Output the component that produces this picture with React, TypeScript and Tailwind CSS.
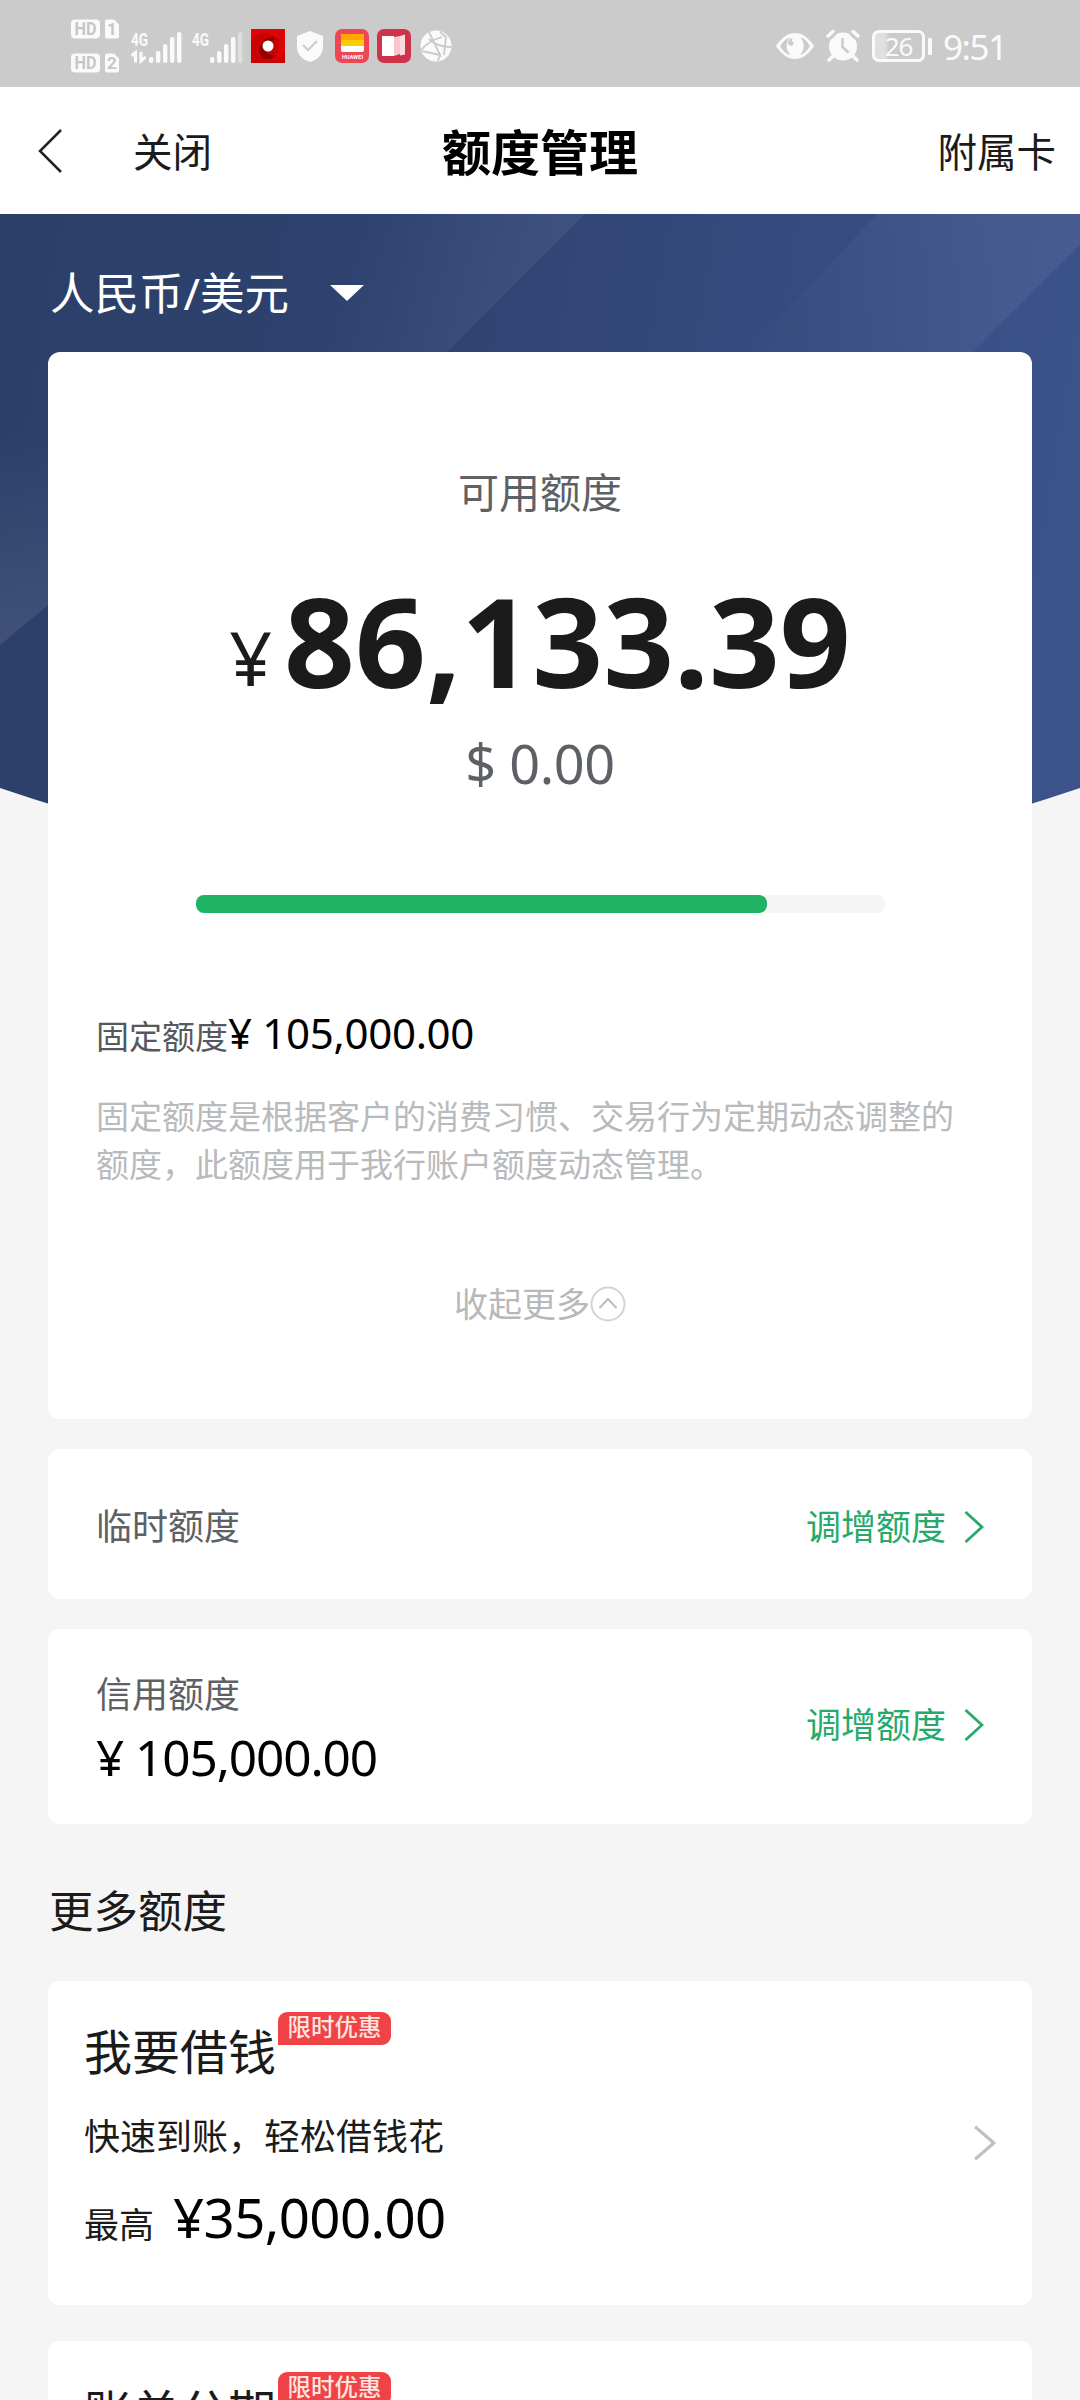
import type { ReactNode } from "react";

const offers = [
  { title: "我要借钱", tag: "限时优惠", desc: "快速到账，轻松借钱花", amount: "¥35,000.00" },
  { title: "账单分期", tag: "限时优惠" },
];

const signalBars = [
  [18, 56],
  [25, 50],
  [32, 43],
  [39, 36],
  [46, 31],
];

function HdSim({ slot }: { slot: string }) {
  return (
    <svg viewBox="0 0 48 20" className="h-[20px] w-[48px]" aria-hidden>
      <rect x="0" y="0.5" width="29" height="19" rx="4" fill="#fafafa" />
      <text x="14.5" y="16.2" textAnchor="middle" fontSize="18" fontWeight="700" fill="#c6c6c6" fontFamily="Roboto" textLength="22" lengthAdjust="spacingAndGlyphs">
        HD
      </text>
      <path d="M36 0.5h7l5 5v12a2 2 0 0 1-2 2H36a2 2 0 0 1-2-2v-15a2 2 0 0 1 2-2z" fill="#fafafa" />
      <text x="41" y="16.2" textAnchor="middle" fontSize="17" fontWeight="700" fill="#c6c6c6" fontFamily="Roboto">
        {slot}
      </text>
    </svg>
  );
}

function Signal({ level, data }: { level: number; data?: boolean }) {
  return (
    <svg viewBox="0 28 51 35" className="h-[35px] w-[51px]" aria-hidden>
      <text x="0" y="45" fontSize="19" fontWeight="700" fill="#fafafa" fontFamily="Roboto" textLength="17" lengthAdjust="spacingAndGlyphs">
        4G
      </text>
      {signalBars.map(([x, y], i) => (
        <rect key={x} x={x} y={y} width="4.4" height={62 - y} rx="2" fill="#fafafa" opacity={i < level ? 1 : 0.4} />
      ))}
      {data ? <path d="M0.500 54.500l4-3v10M10 51v9l4.500-4" fill="none" stroke="#fafafa" strokeWidth="3" /> : null}
    </svg>
  );
}

function StatusBar() {
  return (
    <div className="flex h-[87px] shrink-0 items-center bg-[#cbcbcb] pl-[71px] pr-[74px] pt-[5px]">
      <div className="flex flex-col gap-[14px]">
        <HdSim slot="1" />
        <HdSim slot="2" />
      </div>
      <div className="ml-[12px] flex items-center gap-[10px]">
        <Signal level={5} data />
        <Signal level={4} />
      </div>
      <svg viewBox="0 0 34 34" className="ml-[8px] size-[34px]" aria-hidden>
        <rect width="34" height="34" fill="#df0505" />
        <path d="M0 11C9 1 25 2 28 14c2 10-7 16-16 12 6 9 18 6 22-3V34H0z" fill="#c90202" />
        <path d="M13 12c4-6 13-5 16 1-4-3-8-2-9 0zM11 14c-5 6-3 13 3 16 6 1 10-1 12-4-8 2-12-4-11-8z" fill="#940000" />
        <circle cx="17" cy="17" r="5.5" fill="#fff" />
      </svg>
      <svg viewBox="0 0 26 31" className="ml-[12px] h-[31px] w-[26px]" aria-hidden>
        <path d="M13 0l13 5v11c0 8-6 13-13 15C6 29 0 24 0 16V5z" fill="#fafafa" />
        <path d="M6 14l5 5 9-9" fill="none" stroke="#cbcbcb" strokeWidth="2" />
      </svg>
      <svg viewBox="0 0 34 34" className="ml-[12px] size-[34px]" aria-hidden>
        <rect width="34" height="34" rx="7" fill="#ef4655" />
        <rect x="6" y="5" width="23" height="18" rx="2" fill="#fff" />
        <path d="M6 7a2 2 0 0 1 2-2h19a2 2 0 0 1 2 2v4H6z" fill="#ffa800" />
        <rect x="6" y="11" width="23" height="6" fill="#ffcb05" />
        <text x="17.5" y="29.5" textAnchor="middle" fontSize="5.5" fontWeight="700" fill="#fff" fontFamily="Roboto" textLength="21">
          HUAWEI
        </text>
      </svg>
      <svg viewBox="0 0 34 34" className="ml-[8px] size-[34px]" aria-hidden>
        <rect width="34" height="34" rx="7" fill="#cf3349" />
        <path d="M5 7h12v20H5z" fill="#fff" />
        <path d="M17 8l6-1v18l-6 2z" fill="#f7c5cb" />
        <path d="M23 7l5-1.500v20l-5 1z" fill="#f9dcdf" />
      </svg>
      <svg viewBox="0 0 32 32" className="ml-[9px] size-[32px]" aria-hidden>
        <circle cx="16" cy="16" r="15.5" fill="#fafafa" />
        <path d="M9 2l12 25M1 20c6-7 13-11 21-13M9 9c5 5 12 8 22 8M20 2l6 5-2 18M2 21l18 4-2 6" fill="none" stroke="#cbcbcb" strokeWidth="1.8" />
      </svg>

      <svg viewBox="0 0 38 26" className="ml-auto h-[26px] w-[38px]" aria-hidden>
        <path d="M0 13C6 4 12 0 19 0s13 4 19 13c-6 9-12 13-19 13S6 22 0 13z" fill="#fafafa" />
        <path d="M4 13C7 8 11 5 15 4c-4 3-5 8-4 12 1 3 2 4 4 6-5-1-8-4-11-9zM34 13c-3 5-6 8-10 9 5-5 5-13 0-18 4 1 7 4 10 9z" fill="#cbcbcb" />
        <path d="M12 11c0-3 2-6 5-6-2 2-1 4 1 5-1 3-3 4-6 1z" fill="#cbcbcb" />
      </svg>
      <svg viewBox="0 0 34 32" className="ml-[12px] h-[32px] w-[34px]" aria-hidden>
        <circle cx="17" cy="16.5" r="14" fill="#fafafa" />
        <path d="M2 6l5-4.500M27 1.500l5 4.500M7 26l-4 4M27 26l4 4" fill="none" stroke="#fafafa" strokeWidth="3.5" strokeLinecap="round" />
        <path d="M5 9l5-5M24 4l5 5" fill="none" stroke="#cbcbcb" strokeWidth="1.5" />
        <path d="M16.500 8v9l6 5.500" fill="none" stroke="#cbcbcb" strokeWidth="2.5" />
      </svg>
      <div className="ml-[12px] flex h-[32px] w-[53px] items-center justify-center rounded-[7px] border-[3px] border-[#fafafa] bg-gradient-to-r from-[#e0e0e0] from-20% to-[#cbcbcb] to-30% text-[26px] leading-none tracking-[-1px] text-[#fafafa]">
        26
      </div>
      <div className="ml-[3px] h-[17px] w-[4px] rounded-[1px] bg-[#fafafa]" />
      <div className="ml-[11px] w-[63px] whitespace-nowrap pt-px text-[35px] leading-[34px] tracking-[-1.5px] text-[#fafafa]">9:51</div>
    </div>
  );
}

function Card({ className, children }: { className: string; children: ReactNode }) {
  return <section className={`mx-[48px] shrink-0 rounded-[12px] bg-white ${className}`}>{children}</section>;
}

function IncreaseLink({ className }: { className: string }) {
  return (
    <a href="#" className={`flex items-center text-[35px] leading-[48px] text-[#27a96b] ${className}`}>
      调增额度
      <svg viewBox="0 0 20 32" className="ml-[18px] h-[32px] w-[20px]" fill="none" stroke="currentColor" aria-hidden>
        <path d="M1.500 1L18 16 1.500 31" strokeWidth="2.8" />
      </svg>
    </a>
  );
}

function HeroBackground() {
  return (
    <svg viewBox="0 0 1080 690" className="absolute inset-x-0 top-0 h-[690px] w-full" aria-hidden>
      <defs>
        <linearGradient id="base" x1="0" y1="0" x2="1080" y2="180" gradientUnits="userSpaceOnUse">
          <stop offset="0" stopColor="#2b3f68" />
          <stop offset="0.35" stopColor="#2e4270" />
          <stop offset="0.6" stopColor="#33487a" />
          <stop offset="1" stopColor="#3c528b" />
        </linearGradient>
        <linearGradient id="bandLeft" x1="350" y1="0" x2="530" y2="60" gradientUnits="userSpaceOnUse">
          <stop offset="0" stopColor="#fff" stopOpacity="0" />
          <stop offset="1" stopColor="#fff" stopOpacity="0.06" />
        </linearGradient>
        <linearGradient id="bandRight" x1="780" y1="120" x2="1020" y2="60" gradientUnits="userSpaceOnUse">
          <stop offset="0" stopColor="#fff" stopOpacity="0.01" />
          <stop offset="1" stopColor="#fff" stopOpacity="0.06" />
        </linearGradient>
        <linearGradient id="bandSide" x1="0" y1="220" x2="20" y2="410" gradientUnits="userSpaceOnUse">
          <stop offset="0" stopColor="#fff" stopOpacity="0" />
          <stop offset="1" stopColor="#fff" stopOpacity="0.09" />
        </linearGradient>
      </defs>
      <path d="M0 0H1080V574Q540 758 0 574Z" fill="url(#base)" />
      <path d="M300 0H585L447 138H240Z" fill="url(#bandLeft)" />
      <path d="M877 0H1080V31L973 138H747Z" fill="url(#bandRight)" />
      <path d="M0 190L48 150V391L0 431Z" fill="url(#bandSide)" />
    </svg>
  );
}

export default function App() {
  return (
    <div
      lang="zh-CN"
      className="flex h-[2400px] w-[1080px] flex-col overflow-hidden bg-[#f5f5f5] font-['Noto_Sans','Noto_Sans_CJK_SC',sans-serif] text-[#1b1b1b]"
    >
      <StatusBar />

      <header className="grid h-[127px] shrink-0 grid-cols-3 items-center bg-white pl-[38px] pr-[24px] pt-[2px] text-[39.5px] leading-[50px]">
        <div className="flex items-center">
          <svg viewBox="0 0 24 44" className="mb-[2px] h-[44px] w-[24px]" fill="none" stroke="#222" strokeWidth="2.5" aria-hidden>
            <path d="M23 1L2 22l21 21" />
          </svg>
          <span className="ml-[71px]">关闭</span>
        </div>
        <h1 className="ml-[-14px] text-center text-[49px] font-bold text-black">额度管理</h1>
        <span className="text-right">附属卡</span>
      </header>

      <main className="relative flex flex-col">
        <HeroBackground />

        <div className="relative flex h-[138px] shrink-0 items-center pl-[50px] pt-[20px] text-[44.5px] leading-[60px] text-white">
          人民币/美元
          <svg viewBox="0 0 34 16" className="ml-[41px] h-[16px] w-[34px]" aria-hidden>
            <path d="M0 0h34L17 16z" fill="#fff" />
          </svg>
        </div>

        <Card className="relative flex h-[1067px] flex-col">
          <div className="mt-[110px] text-center text-[41px] leading-[60px] text-[#5d6165]">可用额度</div>
          <div className="mt-[38px] flex h-[160px] items-baseline justify-center leading-[160px]">
            <span className="relative top-[-2px] text-[75px]">¥</span>
            <span className="ml-[12px] text-[124px] font-bold">86,133.39</span>
          </div>
          <div className="mt-[11px] text-center text-[54px] leading-[64px] tracking-[-0.4px] text-[#5d6165]">$ 0.00</div>

          <div className="ml-[148px] mt-[100px] h-[18px] w-[689px] rounded-[8px] bg-[#f5f5f5]">
            <div className="h-full w-[571px] rounded-[8px] bg-[#20b364]" />
          </div>

          <div className="mt-[90px] flex h-[60px] items-baseline pl-[48px] leading-[60px]">
            <span className="text-[33px] text-[#55595d]">固定额度</span>
            <span className="text-[42px] tracking-[-0.3px] text-black">¥ 105,000.00</span>
          </div>
          <p className="mt-[30px] w-[910px] pl-[48px] text-[33px] leading-[48px] text-[#b9babb]">
            固定额度是根据客户的消费习惯、交易行为定期动态调整的额度，此额度用于我行账户额度动态管理。
          </p>

          <button className="mt-[90px] flex items-center justify-center text-[34px] leading-[50px] text-[#b7b8b9]">
            收起更多
            <svg viewBox="0 0 36 36" className="size-[36px]" fill="none" aria-hidden>
              <circle cx="18" cy="18" r="16.5" stroke="#d4d4d4" strokeWidth="2" />
              <path d="M9.500 22l8.500-9 8.500 9" stroke="#bdbdbd" strokeWidth="2.2" />
            </svg>
          </button>
        </Card>

        <Card className="mt-[30px] flex h-[150px] items-center justify-between px-[48px] pt-[6px]">
          <span className="text-[36px] leading-[50px] text-[#5d6165]">临时额度</span>
          <IncreaseLink className="" />
        </Card>

        <Card className="mt-[30px] flex h-[195px] items-center justify-between px-[48px]">
          <div className="flex flex-col pt-[5px]">
            <span className="text-[36px] leading-[56px] text-[#5d6165]">信用额度</span>
            <span className="text-[49.5px] leading-[68px] tracking-[-1.1px] text-black">¥ 105,000.00</span>
          </div>
          <IncreaseLink className="pb-[3px]" />
        </Card>

        <h2 className="ml-[49px] mt-[57px] h-[60px] text-[44.5px] leading-[60px]">更多额度</h2>

        {offers.map((offer, i) => (
          <Card key={offer.title} className={i === 0 ? "mt-[40px] h-[324px]" : "mt-[36px] h-[324px]"}>
            <div className="flex h-full items-center justify-between pl-[36px] pr-[36px]">
              <div className="flex h-full flex-col pt-[31px]">
                <div className="flex">
                  <h3 className="pt-[6px] text-[48px] leading-[68px]">{offer.title}</h3>
                  <span className="ml-[2px] h-[33px] w-[113px] rounded-[9px] rounded-bl-none bg-[#f04347] text-center text-[23.5px] font-medium leading-[31px] text-[#ffe3df]">
                    {offer.tag}
                  </span>
                </div>
                {offer.desc ? <p className="mt-[26px] text-[36px] leading-[50px]">{offer.desc}</p> : null}
                {offer.amount ? (
                  <p className="mt-[15px] flex items-baseline leading-[80px]">
                    <span className="text-[35px]">最高</span>
                    <span className="ml-[19px] text-[54.5px] tracking-[-0.6px] text-black">{offer.amount}</span>
                  </p>
                ) : null}
              </div>
              {offer.amount ? (
                <svg viewBox="0 0 22 34" className="h-[36px] w-[23px] text-[#c0c0c0]" fill="none" stroke="currentColor" aria-hidden>
                  <path d="M2 1.500L20 17 2 32.500" strokeWidth="3" />
                </svg>
              ) : null}
            </div>
          </Card>
        ))}
      </main>
    </div>
  );
}
